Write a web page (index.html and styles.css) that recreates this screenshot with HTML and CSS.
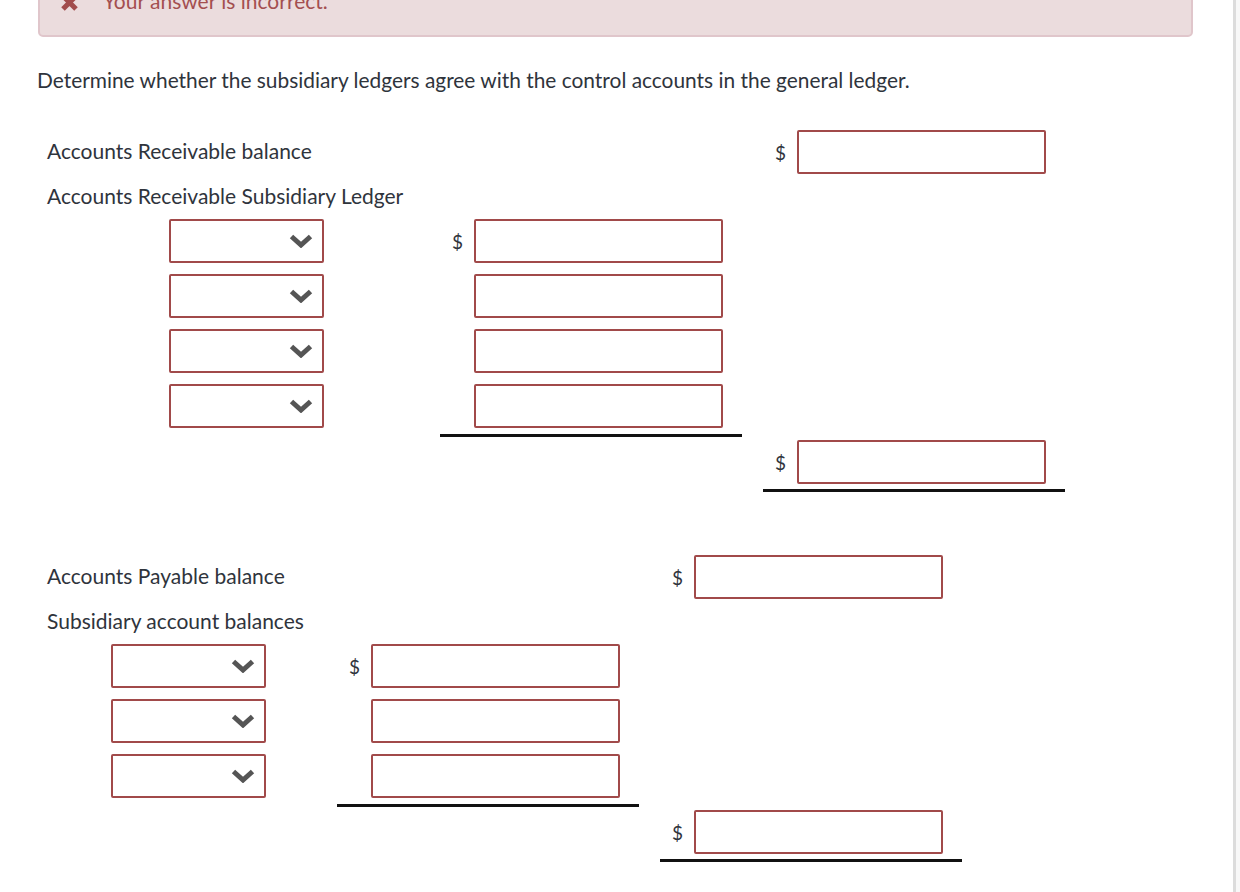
FILE: index.html
```html
<!DOCTYPE html>
<html lang="en">
<head>
    <meta charset="UTF-8">
    <meta name="viewport" content="width=device-width, initial-scale=1.0">
    <title>Subsidiary Ledgers</title>
    <link rel="stylesheet" href="styles.css">
</head>
<body>
    <div class="page">
        <div class="alert">
            <svg class="alert-icon" width="19" height="19" viewBox="0 0 19 19">
                <path d="M3 3 L16 16 M16 3 L3 16" stroke="#a14c4c" stroke-width="5" fill="none"/>
            </svg>
            <span class="alert-text">Your answer is incorrect.</span>
        </div>

        <p class="question">Determine whether the subsidiary ledgers agree with the control accounts in the general ledger.</p>

        <!-- Receivables -->
        <div class="ledger ledger-ar">
            <span class="label label-top">Accounts Receivable balance</span>
            <div class="entry col-c">
                <span class="dollar">$</span>
                <input class="amount" type="text">
            </div>

            <span class="label label-wide">Accounts Receivable Subsidiary Ledger</span>

            <div class="picks">
                <div class="pick">
                    <select><option></option></select>
                    <svg class="chevron" width="24" height="14" viewBox="0 0 24 14"><polyline points="2.5,2.5 12,11 21.5,2.5"/></svg>
                </div>
                <div class="pick">
                    <select><option></option></select>
                    <svg class="chevron" width="24" height="14" viewBox="0 0 24 14"><polyline points="2.5,2.5 12,11 21.5,2.5"/></svg>
                </div>
                <div class="pick">
                    <select><option></option></select>
                    <svg class="chevron" width="24" height="14" viewBox="0 0 24 14"><polyline points="2.5,2.5 12,11 21.5,2.5"/></svg>
                </div>
                <div class="pick">
                    <select><option></option></select>
                    <svg class="chevron" width="24" height="14" viewBox="0 0 24 14"><polyline points="2.5,2.5 12,11 21.5,2.5"/></svg>
                </div>
            </div>

            <div class="entries">
                <div class="entry">
                    <span class="dollar">$</span>
                    <input class="amount" type="text">
                </div>
                <div class="entry">
                    <span class="dollar"></span>
                    <input class="amount" type="text">
                </div>
                <div class="entry">
                    <span class="dollar"></span>
                    <input class="amount" type="text">
                </div>
                <div class="entry">
                    <span class="dollar"></span>
                    <input class="amount" type="text">
                </div>
            </div>

            <div class="entry total col-c">
                <span class="dollar">$</span>
                <input class="amount" type="text">
            </div>
        </div>

        <!-- Payables -->
        <div class="ledger ledger-ap">
            <span class="label label-top">Accounts Payable balance</span>
            <div class="entry col-c">
                <span class="dollar">$</span>
                <input class="amount" type="text">
            </div>

            <span class="label label-wide">Subsidiary account balances</span>

            <div class="picks">
                <div class="pick">
                    <select><option></option></select>
                    <svg class="chevron" width="24" height="14" viewBox="0 0 24 14"><polyline points="2.5,2.5 12,11 21.5,2.5"/></svg>
                </div>
                <div class="pick">
                    <select><option></option></select>
                    <svg class="chevron" width="24" height="14" viewBox="0 0 24 14"><polyline points="2.5,2.5 12,11 21.5,2.5"/></svg>
                </div>
                <div class="pick">
                    <select><option></option></select>
                    <svg class="chevron" width="24" height="14" viewBox="0 0 24 14"><polyline points="2.5,2.5 12,11 21.5,2.5"/></svg>
                </div>
            </div>

            <div class="entries">
                <div class="entry">
                    <span class="dollar">$</span>
                    <input class="amount" type="text">
                </div>
                <div class="entry">
                    <span class="dollar"></span>
                    <input class="amount" type="text">
                </div>
                <div class="entry">
                    <span class="dollar"></span>
                    <input class="amount" type="text">
                </div>
            </div>

            <div class="entry total col-c">
                <span class="dollar">$</span>
                <input class="amount" type="text">
            </div>
        </div>
    </div>
</body>
</html>
```

FILE: styles.css
```css
* {
    margin: 0;
    padding: 0;
    box-sizing: border-box;
}

body {
    font-family: Lato, 'Open Sans', sans-serif;
    font-size: 21px;
    color: #2f343c;
    background: #f8f8f8;
    overflow: hidden;
}

.page {
    width: 1236px;
    min-height: 940px;
    background: #fff;
    border-right: 3px solid #dcdcdc;
    padding: 0 40px 0 37px;
}

/* feedback banner, scrolled partly out of view */
.alert {
    display: flex;
    align-items: center;
    margin: -40px 0 0 1px;
    padding: 24px 20px 19px 20px;
    background: #ebdcdd;
    border: 2px solid #e0c6cb;
    border-radius: 5px;
    line-height: 30px;
    color: #a44f50;
}

.alert-icon {
    margin: 2px 24px 0 0;
    flex-shrink: 0;
}

.question {
    margin-top: 28px;
    font-size: 20.9px;
    line-height: 30px;
}

/* ledger tables */
.ledger {
    display: grid;
    column-gap: 21px;
    padding-left: 10px;
    margin-top: 35px;
}

.ledger-ar {
    grid-template-columns: 372px 302px 302px;
}

.ledger-ap {
    grid-template-columns: 269px 302px 302px;
    margin-top: 63px;
}

.label {
    display: flex;
    align-items: center;
    height: 44px;
    padding-bottom: 3px;
}

.label-top {
    grid-column: 1 / 3;
}

.label-wide {
    grid-column: 1 / 4;
    height: 45px;
}

.col-c {
    grid-column: 3;
}

.picks {
    grid-column: 1;
    grid-row: 3;
    display: flex;
    flex-direction: column;
    gap: 11px;
}

.ledger-ar .picks {
    padding-left: 122px;
}

.ledger-ap .picks {
    padding-left: 64px;
}

.pick {
    position: relative;
    width: 155px;
    height: 44px;
}

.pick select {
    appearance: none;
    -webkit-appearance: none;
    width: 100%;
    height: 100%;
    border: 2px solid #a14a4a;
    border-radius: 2px;
    background: #fff;
    font: inherit;
}

.chevron {
    position: absolute;
    right: 11px;
    top: 15px;
    pointer-events: none;
}

.chevron polyline {
    fill: none;
    stroke: #555;
    stroke-width: 5;
}

.entries {
    grid-column: 2;
    grid-row: 3;
    display: flex;
    flex-direction: column;
    gap: 11px;
    padding-bottom: 6px;
    border-bottom: 3px solid #111;
}

.entry {
    display: flex;
    align-items: center;
}

.entry.total {
    grid-row: 4;
    margin-top: 3px;
    padding-bottom: 5px;
    border-bottom: 3px solid #111;
}

.dollar {
    width: 34px;
    padding-right: 11px;
    text-align: right;
    font-size: 19px;
    flex-shrink: 0;
}

.amount {
    width: 249px;
    height: 44px;
    border: 2px solid #a14a4a;
    border-radius: 2px;
    background: #fff;
    font: inherit;
}
```
